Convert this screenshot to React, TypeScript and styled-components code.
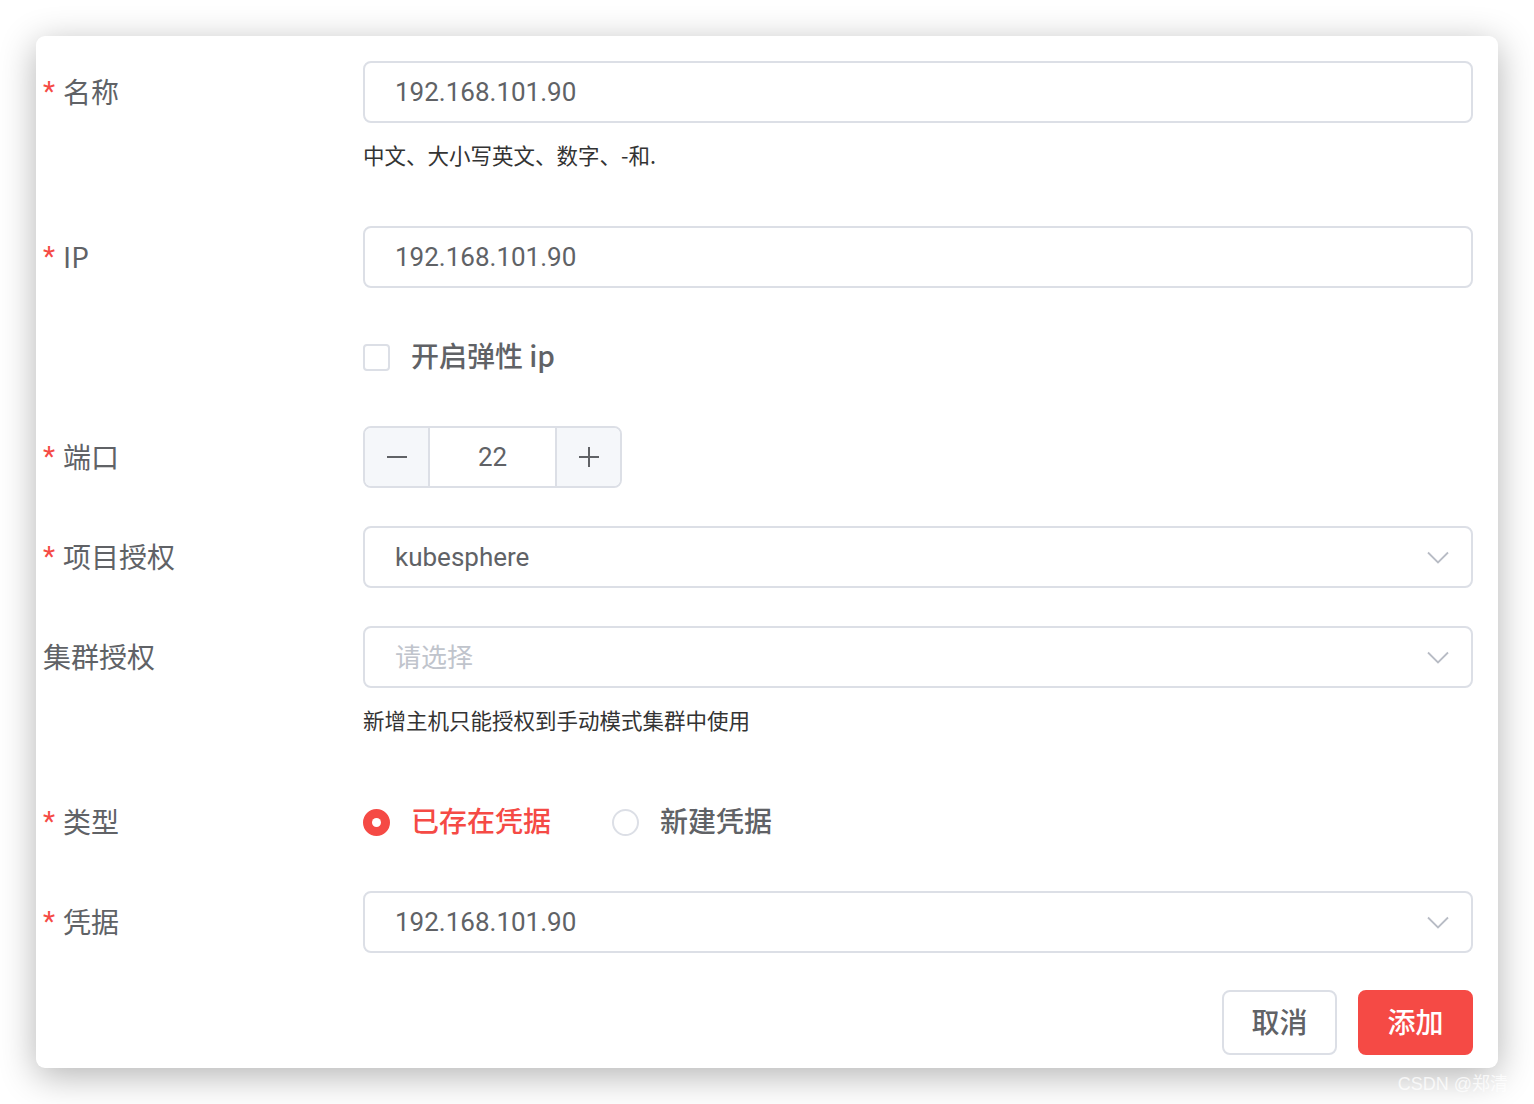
import styled, { createGlobalStyle } from 'styled-components';

const GlobalStyle = createGlobalStyle`
    html, body {
        margin: 0;
        padding: 0;
        background: #ffffff;
    }
    body {
        font-family: Roboto, 'Noto Sans CJK SC', sans-serif;
    }
`;

const RED = '#f54a45';
const BORDER = '#dcdfe6';
const TEXT = '#606266';

const Page = styled.div`
    position: relative;
    padding: 36px;
    height: 1104px;
    box-sizing: border-box;
`;

const Card = styled.div`
    background: #fff;
    border-radius: 9px;
    box-shadow: 0 8px 36px rgba(0, 0, 0, 0.3);
    padding: 25px 25px 13px 7px;
`;

const FormItem = styled.div<{ $gap?: number }>`
    display: grid;
    grid-template-columns: 320px 1fr;
    margin-bottom: ${(p) => (p.$gap ?? 38)}px;
`;

const Label = styled.div`
    height: 62px;
    padding-bottom: 3px;
    box-sizing: border-box;
    display: flex;
    align-items: center;
    font-size: 28px;
    color: ${TEXT};
    font-family: 'Noto Sans CJK SC', Roboto, sans-serif;
`;

const Star = styled.span`
    color: ${RED};
    font-family: Roboto, sans-serif;
    font-size: 28px;
    margin-right: 8px;
    position: relative;
    top: 1px;
`;

const Field = styled.div`
    display: flex;
    flex-direction: column;
`;

const InputBox = styled.div`
    height: 62px;
    box-sizing: border-box;
    border: 2px solid ${BORDER};
    border-radius: 8px;
    padding: 0 22px 0 30px;
    display: flex;
    align-items: center;
    justify-content: space-between;
    font-size: 26px;
    color: ${TEXT};
`;

const Placeholder = styled.span`
    color: #c0c4cc;
    font-family: 'Noto Sans CJK SC', sans-serif;
    font-size: 26px;
    position: relative;
    top: -2px;
`;

const Help = styled.div`
    font-size: 21.5px;
    line-height: 44px;
    padding: 10px 0 11px;
    color: #333;
    font-family: 'Noto Sans CJK SC', Roboto, sans-serif;
`;

const Inline = styled.div`
    height: 62px;
    display: flex;
    align-items: center;
`;

const Checkbox = styled.span`
    width: 27px;
    height: 27px;
    box-sizing: border-box;
    border: 2px solid ${BORDER};
    border-radius: 4px;
    background: #fff;
`;

const OptionText = styled.span<{ $active?: boolean }>`
    margin-left: 21px;
    font-size: 28px;
    font-weight: 500;
    color: ${(p) => (p.$active ? RED : TEXT)};
    font-family: 'Noto Sans CJK SC', Roboto, sans-serif;
    position: relative;
    top: -2px;
`;

const Radio = styled.span<{ $checked?: boolean }>`
    width: 27px;
    height: 27px;
    box-sizing: border-box;
    border-radius: 50%;
    border: 2px solid ${(p) => (p.$checked ? RED : BORDER)};
    background: ${(p) => (p.$checked ? RED : '#fff')};
    display: flex;
    align-items: center;
    justify-content: center;
    &::after {
        content: '';
        width: 9px;
        height: 9px;
        border-radius: 50%;
        background: #fff;
        display: ${(p) => (p.$checked ? 'block' : 'none')};
    }
`;

const RadioOption = styled.label`
    display: flex;
    align-items: center;
    margin-right: 61px;
`;

const Stepper = styled.div`
    width: 259px;
    height: 62px;
    box-sizing: border-box;
    border: 2px solid ${BORDER};
    border-radius: 8px;
    display: flex;
    overflow: hidden;
`;

const StepBtn = styled.span<{ $side: 'left' | 'right' }>`
    width: 65px;
    box-sizing: border-box;
    background: #f5f7fa;
    display: flex;
    align-items: center;
    justify-content: center;
    ${(p) => (p.$side === 'left' ? `border-right: 2px solid ${BORDER};` : `border-left: 2px solid ${BORDER};`)}
`;

const StepValue = styled.span`
    flex: 1;
    display: flex;
    align-items: center;
    justify-content: center;
    font-size: 26px;
    color: ${TEXT};
`;

const Footer = styled.div`
    display: flex;
    justify-content: flex-end;
    gap: 21px;
`;

const Button = styled.button<{ $primary?: boolean }>`
    width: 115px;
    height: 65px;
    box-sizing: border-box;
    border-radius: 8px;
    border: 2px solid ${(p) => (p.$primary ? RED : BORDER)};
    background: ${(p) => (p.$primary ? RED : '#fff')};
    color: ${(p) => (p.$primary ? '#fff' : TEXT)};
    font-size: 28px;
    font-weight: 500;
    font-family: 'Noto Sans CJK SC', sans-serif;
    cursor: pointer;
    padding: 0 0 3px;
`;

const Watermark = styled.div`
    position: absolute;
    right: 26px;
    bottom: 9px;
    font-size: 18px;
    color: rgba(255, 255, 255, 0.75);
    font-family: 'Liberation Sans', 'Noto Sans CJK SC', sans-serif;
`;

const Chevron = () => (
    <svg width="22" height="13" viewBox="0 0 22 13" fill="none">
        <path d="M1 1.5 L11 11.5 L21 1.5" stroke="#b8bcc5" strokeWidth="1.8" />
    </svg>
);

const Minus = () => (
    <svg width="20" height="20" viewBox="0 0 20 20">
        <path d="M0 10 H20" stroke={TEXT} strokeWidth="2" />
    </svg>
);

const Plus = () => (
    <svg width="20" height="20" viewBox="0 0 20 20">
        <path d="M0 10 H20 M10 0 V20" stroke={TEXT} strokeWidth="2" />
    </svg>
);

const ReqLabel = ({ text, required = true }: { text: string; required?: boolean }) => (
    <Label>
        {required && <Star>*</Star>}
        {text}
    </Label>
);

const App = () => {
    return (
        <Page>
            <GlobalStyle />
            <Card>
                <FormItem>
                    <ReqLabel text="名称" />
                    <Field>
                        <InputBox>192.168.101.90</InputBox>
                        <Help>中文、大小写英文、数字、-和.</Help>
                    </Field>
                </FormItem>
                <FormItem>
                    <ReqLabel text="IP" />
                    <InputBox>192.168.101.90</InputBox>
                </FormItem>
                <FormItem>
                    <div />
                    <Inline>
                        <Checkbox />
                        <OptionText>开启弹性 ip</OptionText>
                    </Inline>
                </FormItem>
                <FormItem>
                    <ReqLabel text="端口" />
                    <Inline>
                        <Stepper>
                            <StepBtn $side="left"><Minus /></StepBtn>
                            <StepValue>22</StepValue>
                            <StepBtn $side="right"><Plus /></StepBtn>
                        </Stepper>
                    </Inline>
                </FormItem>
                <FormItem>
                    <ReqLabel text="项目授权" />
                    <InputBox>
                        <span>kubesphere</span>
                        <Chevron />
                    </InputBox>
                </FormItem>
                <FormItem>
                    <ReqLabel text="集群授权" required={false} />
                    <Field>
                        <InputBox>
                            <Placeholder>请选择</Placeholder>
                            <Chevron />
                        </InputBox>
                        <Help>新增主机只能授权到手动模式集群中使用</Help>
                    </Field>
                </FormItem>
                <FormItem>
                    <ReqLabel text="类型" />
                    <Inline>
                        <RadioOption>
                            <Radio $checked />
                            <OptionText $active>已存在凭据</OptionText>
                        </RadioOption>
                        <RadioOption>
                            <Radio />
                            <OptionText>新建凭据</OptionText>
                        </RadioOption>
                    </Inline>
                </FormItem>
                <FormItem $gap={37}>
                    <ReqLabel text="凭据" />
                    <InputBox>
                        <span>192.168.101.90</span>
                        <Chevron />
                    </InputBox>
                </FormItem>
                <Footer>
                    <Button>取消</Button>
                    <Button $primary>添加</Button>
                </Footer>
            </Card>
            <Watermark>CSDN @郑清</Watermark>
        </Page>
    );
};

export default App;
